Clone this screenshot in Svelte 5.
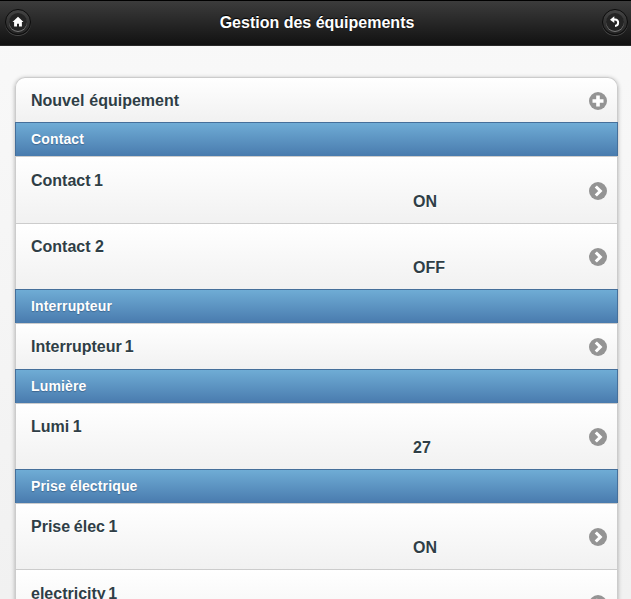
<script>
  const items = [
    { text: 'Nouvel équipement', icon: 'plus', h: 45, top: 12, mark: 14, word: 0.5 },
    { divider: 'Contact' },
    { text: 'Contact 1', value: 'ON', h: 67, top: 13, mark: 25, word: -1 },
    { text: 'Contact 2', value: 'OFF', h: 66, top: 12, mark: 24, word: 0 },
    { divider: 'Interrupteur' },
    { text: 'Interrupteur 1', h: 46, top: 12, mark: 14, word: -1.3 },
    { divider: 'Lumière' },
    { text: 'Lumi 1', value: '27', h: 66, top: 12, mark: 24, word: -1 },
    { divider: 'Prise électrique' },
    { text: 'Prise élec 1', value: 'ON', h: 66, top: 12, mark: 24, word: -0.8 },
    { text: 'electricity 1', h: 67, top: 13, mark: 25, word: -2 }
  ];
</script>

<div class="page">
  <header>
    <button class="round" aria-label="Accueil">
      <svg width="18" height="18" viewBox="0 0 18 18"><path fill="#fff" d="M9 3.7 L14.5 9 H12.9 V13.6 H10 V10.8 H8 V13.6 H5.1 V9 H3.5 Z" /></svg>
    </button>
    <h1>Gestion des équipements</h1>
    <button class="round" aria-label="Retour">
      <svg width="18" height="18" viewBox="0 0 18 18"><path fill="#fff" d="M4 6.7 L8.3 3.2 V10 Z" /><path fill="none" stroke="#fff" stroke-width="2" d="M7 6.6 H9 C13.2 6.8 13.2 12.8 9 13" /></svg>
    </button>
  </header>

  <ul>
    {#each items as item}
      {#if item.divider}
        <li class="divider">{item.divider}</li>
      {:else}
        <li class="row" style:height="{item.h}px">
          <div class="body" style:padding-top="{item.top}px">
            <div style:word-spacing="{item.word}px">{item.text}</div>
            {#if item.value}<div class="value">{item.value}</div>{/if}
          </div>
          <svg class="icon" style:margin-top="{item.mark}px" width="18" height="18" viewBox="0 0 18 18">
            <circle cx="9" cy="9" r="9" fill="#949494" />
            {#if item.icon === 'plus'}
              <path d="M9 3.5 V14.5 M3.5 9 H14.5" stroke="#fff" stroke-width="3.6" />
            {:else}
              <path d="M6.8 4.5 L11.3 9 L6.8 13.5" fill="none" stroke="#fff" stroke-width="3.1" />
            {/if}
          </svg>
        </li>
      {/if}
    {/each}
  </ul>
</div>

<style>
  .page {
    box-sizing: border-box;
    height: 599px;
    overflow: hidden;
    background: linear-gradient(#f9f9f9, #f1f1f1);
    font-family: 'Liberation Sans', Arial, sans-serif;
    font-weight: bold;
    color: #2f3e46;
  }
  header {
    box-sizing: border-box;
    height: 46px;
    padding: 0 3px 3px 5px;
    display: flex;
    align-items: center;
    justify-content: space-between;
    border-top: 1px solid #000;
    border-bottom: 1px solid #2a2a2a;
    background: linear-gradient(#3c3c3c, #111);
  }
  h1 {
    margin: 0;
    padding: 2px 0 0 1px;
    font-size: 16px;
    line-height: 20px;
    color: #fff;
    text-shadow: 0 -1px 1px #000;
  }
  .round {
    box-sizing: border-box;
    width: 26px;
    height: 26px;
    padding: 0;
    display: flex;
    align-items: center;
    justify-content: center;
    border: 1px solid #0c0c0c;
    border-radius: 50%;
    background: linear-gradient(#444, #252525);
    box-shadow: 0 1px 0 #484848;
  }
  .round svg {
    border-radius: 50%;
    background: #242424;
    box-shadow: 0 1px 0 #777;
  }
  ul {
    list-style: none;
    width: 603px;
    margin: 31px 0 0 15px;
    padding: 0;
    border-radius: 10px 10px 0 0;
    box-shadow: 0 1px 4px rgba(0, 0, 0, 0.3);
  }
  li {
    box-sizing: border-box;
  }
  .divider {
    height: 34px;
    padding-left: 15px;
    border: 1px solid #456f9a;
    border-bottom: 0;
    background: linear-gradient(#6facd5, #497bae);
    color: #fff;
    font-size: 14px;
    line-height: 32px;
    letter-spacing: 0.14px;
    text-shadow: 0 1px 1px #3e6790;
  }
  .row {
    display: flex;
    justify-content: space-between;
    align-items: flex-start;
    padding: 0 10px 0 15px;
    border: 1px solid #ccc;
    border-bottom: 0;
    background: linear-gradient(#fff, #f1f1f1);
    font-size: 16px;
    line-height: 21px;
    text-shadow: 0 1px 0 #fff;
  }
  .row:first-child {
    border-radius: 10px 10px 0 0;
  }
  .body {
    flex: 1;
  }
  .value {
    padding-left: 382px;
  }
  .icon {
    flex: none;
  }
</style>
